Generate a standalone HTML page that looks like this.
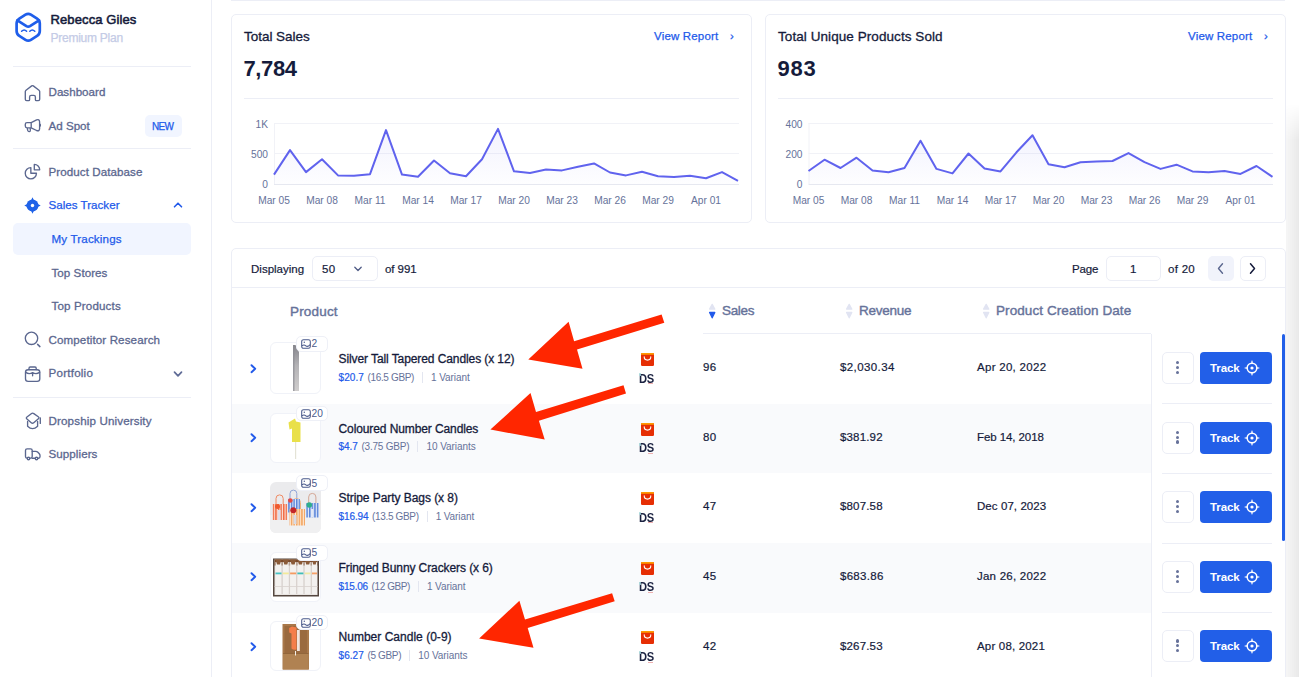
<!DOCTYPE html>
<html lang="en">
<head>
<meta charset="utf-8">
<title>Sales Tracker - My Trackings</title>
<style>
*{box-sizing:border-box;margin:0;padding:0}
html,body{width:1299px;height:677px;overflow:hidden;background:#fff}
body{position:relative;font-family:"Liberation Sans",sans-serif;color:#151b3b;font-size:12px}
.abs{position:absolute}
.t{position:absolute;white-space:nowrap;line-height:1}
/* sidebar */
#side{position:absolute;left:0;top:0;width:212px;height:677px;background:#fff;border-right:1px solid #eceef6}
.hr{position:absolute;left:13px;width:178px;height:1px;background:#eceef6}
.nav{position:absolute;left:48.5px;white-space:nowrap;font-size:11.6px;font-weight:500;color:#5b678f;line-height:14px;-webkit-text-stroke:.3px #5b678f}
.nav.sub{left:51.5px}
.nav.on{color:#225aea;-webkit-text-stroke:.25px #225aea}
.ico{position:absolute;left:24px;width:17px;height:17px;fill:none;stroke:#5b678f;stroke-width:1.5;stroke-linecap:round;stroke-linejoin:round}
/* cards */
.card{position:absolute;border:1px solid #eceef6;border-radius:5px;background:#fff}
.ct{position:absolute;font-size:13.5px;font-weight:500;color:#151b3b;white-space:nowrap;line-height:16px;-webkit-text-stroke:.3px #151b3b}
.big{position:absolute;font-size:22px;font-weight:700;color:#151b3b;white-space:nowrap;line-height:26px}
.vr{position:absolute;font-size:11.5px;font-weight:500;color:#225aea;white-space:nowrap;line-height:14px;-webkit-text-stroke:.25px #225aea}
svg text{font-family:"Liberation Sans",sans-serif}
/* table */
.row{position:absolute;left:232px;width:919px}
.row.g{background:#f9fafc}
.pimg{position:absolute;left:270px;width:51px;height:52px;border:1px solid #f0f2f8;border-radius:6px;background:#fff;overflow:hidden}
.badge{position:absolute;left:296px;width:32px;height:15.5px;border:1px solid #eef0f7;border-radius:5px;background:#fff}
.badge svg{position:absolute;left:3.8px;top:2px;width:10px;height:10px;fill:none;stroke:#4a5a8c;stroke-width:1.05}
.badge span{position:absolute;left:14.6px;top:1.2px;font-size:10.2px;line-height:11px;color:#4a5a8c}
.chev{position:absolute;left:249px;width:8px;height:12px;fill:none;stroke:#225aea;stroke-width:1.9;stroke-linecap:round;stroke-linejoin:round}
.pn{position:absolute;left:338.5px;font-size:12px;font-weight:500;color:#151b3b;white-space:nowrap;line-height:14px;-webkit-text-stroke:.3px #151b3b}
.ps{position:absolute;left:338.5px;font-size:10px;color:#66729a;white-space:nowrap;line-height:12px}
.ps b{font-weight:500;color:#225aea;-webkit-text-stroke:.2px #225aea;margin-right:3.6px}
.ps span{display:inline-block}
.ps i{display:inline-block;width:1px;height:11px;background:#e3e6f0;margin:0 8px 0 8px;vertical-align:-2px}
.bag{position:absolute;left:641px;width:13px;height:13px}
.ds{position:absolute;left:638.8px;font-size:12px;font-weight:700;color:#1a2140;line-height:12px;letter-spacing:-.3px;margin-top:.2px;transform:scaleX(.93);transform-origin:0 0}
.val{position:absolute;font-size:11.5px;font-weight:500;color:#151b3b;white-space:nowrap;line-height:14px;-webkit-text-stroke:.2px #151b3b}
.th{position:absolute;font-size:13.5px;font-weight:500;color:#66729a;white-space:nowrap;line-height:16px;-webkit-text-stroke:.4px #66729a}
.more{position:absolute;left:1162px;width:32px;height:32px;border:1px solid #eceef6;border-radius:5px;background:#fff}
.more i{position:absolute;left:13.2px;width:3.2px;height:3.2px;border-radius:50%;background:#67729a}
.track{position:absolute;left:1200px;width:72px;height:32px;border-radius:4px;background:#225fe8;color:#fff;font-size:11.5px;font-weight:700;line-height:33px;padding-left:10px;letter-spacing:-.08px}
.track svg{position:absolute;left:44.4px;top:8px;width:16px;height:16px;fill:none;stroke:#fff;stroke-width:1.6;stroke-linecap:round}
.sep{position:absolute;left:1162px;width:110px;height:1px;background:#eceef6}
</style>
</head>
<body>

<!-- ================= SIDEBAR ================= -->
<div id="side">
  <svg class="abs" style="left:0;top:0" width="212" height="480" viewBox="0 0 212 480" fill="none" stroke="#5b678f" stroke-width="1.35" stroke-linecap="round" stroke-linejoin="round">
    <g stroke="#1f5eea" stroke-width="2.7">
      <path d="M25.5 14.62Q28.2 12.9 30.9 14.62L37.1 18.58Q39.8 20.3 39.8 23.5L39.8 31Q39.8 34.2 37.09 35.9L30.91 39.8Q28.2 41.5 25.49 39.8L19.31 35.9Q16.6 34.2 16.6 31L16.6 23.5Q16.6 20.3 19.3 18.58Z"/>
      <path d="M17.4 20.3 L26.4 26.1 Q28.2 27.2 30 26.1 L39 20.3"/>
      <path d="M21.6 31.2 Q24.2 28.6 26.6 31.2 M29.8 31.2 Q32.2 28.6 34.8 31.2" stroke-width="1.5"/>
    </g>
    <path d="M25.3 91.6Q25.3 90.8 26 90.2L31.7 85.9Q32.5 85.3 33.3 85.9L39 90.2Q39.7 90.8 39.7 91.6V99.2Q39.7 100.6 38.3 100.6H36.3Q35.4 100.6 35.4 99.7V97Q35.4 95.4 33.8 95.4H31.2Q29.6 95.4 29.6 97V99.7Q29.6 100.6 28.7 100.6H26.7Q25.3 100.6 25.3 99.2Z"/>
    <path d="M31.2 122.6L36.6 119.9Q39.4 118.8 39.6 121.8V128.6Q39.4 131.6 36.6 130.5L31.2 127.8M31.2 122.6H27Q25.3 122.6 25.3 124.3V126.1Q25.3 127.8 27 127.8H31.2ZM27.2 128L27.8 130.6Q28.2 131.8 29.4 131.6Q30.6 131.4 30.4 130.2L30.1 128M40.3 124.4V126"/>
    <path d="M30.85 167.6A5.6 5.6 0 1 0 36.45 173.2H30.85ZM34.3 164.4A5.4 5.4 0 0 1 39.7 169.8H34.3Z"/>
    <g stroke="none" fill="#1f62e8"><circle cx="32.5" cy="205.5" r="6"/><path d="M31.1 200.2L32.5 197.3L33.9 200.2ZM31.1 210.8L32.5 213.7L33.9 210.8ZM27.2 204.1L24.3 205.5L27.2 206.9ZM37.8 204.1L40.7 205.5L37.8 206.9Z"/><circle cx="32.5" cy="205.5" r="1.7" fill="#fff"/></g>
    <circle cx="31.5" cy="338.3" r="6.2"/><path d="M37.6 344.4L39.9 346.6" stroke-width="1.5"/>
    <rect x="25.5" y="369.7" width="14.3" height="11.6" rx="2.6"/><path d="M29 369.5V368.2Q29 367 30.2 367H35Q36.2 367 36.2 368.2V369.5M25.7 372.4Q29 374.7 32.6 372.6Q36.2 374.7 39.6 372.4M32.6 374V375.8"/>
    <path d="M26.93 419.03Q25.7 418 26.96 417.02L31.24 413.68Q32.5 412.7 33.82 413.61L38.28 416.69Q39.6 417.6 38.39 418.64L33.71 422.66Q32.5 423.7 31.27 422.67Z"/><path d="M27.6 421.4V426.2Q32.5 431 37.6 426.2V421.4M40.3 417.8V423.4"/>
    <rect x="25.5" y="448.9" width="6.7" height="9.3" rx="1.6"/><path d="M32.2 451.3H35.6Q37 451.3 37.9 452.3L39.3 453.8Q40 454.6 40 455.6V456.8Q40 458.2 38.6 458.2H32.2"/><circle cx="28.5" cy="458.5" r="1.25" fill="#fff"/><circle cx="36.5" cy="458.5" r="1.25" fill="#fff"/>
  </svg>
  <div class="t" style="letter-spacing:0.11px;left:50.5px;top:12.5px;font-size:13px;font-weight:400;color:#151b3b;line-height:14px;-webkit-text-stroke:.55px #151b3b">Rebecca Giles</div>
  <div class="t" style="letter-spacing:-0.25px;left:50.5px;top:30.5px;font-size:12px;font-weight:500;color:#c4cbe6;line-height:14px;-webkit-text-stroke:.25px #c4cbe6">Premium Plan</div>
  <div class="hr" style="top:66px"></div>
  <div class="nav" style="letter-spacing:0.02px;top:85px">Dashboard</div>
  <div class="nav" style="letter-spacing:0.0px;top:119px">Ad Spot</div>
  <div class="abs" style="left:145px;top:115px;width:37px;height:22px;border-radius:5px;background:#f1f5ff"></div>
  <div class="t" style="letter-spacing:-0.65px;left:152px;top:120.5px;font-size:10px;font-weight:500;color:#225aea;line-height:11px;-webkit-text-stroke:.25px #225aea">NEW</div>
  <div class="hr" style="top:148px"></div>
  <div class="nav" style="letter-spacing:0.07px;top:165px">Product Database</div>
  <div class="nav on" style="letter-spacing:0.01px;top:198px">Sales Tracker</div>
  <svg class="abs" style="left:172.8px;top:201px;width:10px;height:8px" viewBox="0 0 10 8" fill="none" stroke="#225aea" stroke-width="1.6" stroke-linecap="round" stroke-linejoin="round"><path d="M1.5 5.8 L5 2.2 L8.5 5.8"/></svg>

  <div class="abs" style="left:13px;top:223px;width:178px;height:32px;border-radius:5px;background:#f1f5ff"></div>
  <div class="nav sub on" style="letter-spacing:0.16px;top:232px">My Trackings</div>
  <div class="nav sub" style="letter-spacing:0.05px;top:266px">Top Stores</div>
  <div class="nav sub" style="letter-spacing:0.14px;top:299px">Top Products</div>
  <div class="nav" style="letter-spacing:0.11px;top:333px">Competitor Research</div>
  <div class="nav" style="letter-spacing:0.23px;top:366px">Portfolio</div>
  <svg class="abs" style="left:172.8px;top:370px;width:10px;height:8px" viewBox="0 0 10 8" fill="none" stroke="#5f6b96" stroke-width="1.7" stroke-linecap="round" stroke-linejoin="round"><path d="M1.5 2.2 L5 5.8 L8.5 2.2"/></svg>
  <div class="hr" style="top:397px"></div>
  <div class="nav" style="letter-spacing:0.14px;top:414px">Dropship University</div>
  <div class="nav" style="letter-spacing:0.07px;top:447px">Suppliers</div>
</div>

<!-- ================= TOP LINE ================= -->
<div class="abs" style="left:231px;top:0;width:1054px;height:1px;background:#eceef6"></div>

<!-- ================= CARD 1 ================= -->
<div class="card" style="left:231px;top:14px;width:521px;height:209px"></div>
<div class="ct" style="letter-spacing:-0.03px;left:244px;top:28.7px">Total Sales</div>
<div class="big" style="letter-spacing:-0.37px;left:243.5px;top:56px">7,784</div>
<div class="vr" style="letter-spacing:0.18px;left:654px;top:29px">View Report</div>
<div class="vr" style="left:730px;top:28.5px">›</div>
<div class="abs" style="left:244px;top:98px;width:495px;height:1px;background:#eceef6"></div>
<svg class="abs" style="left:231px;top:100px" width="521" height="122" viewBox="231 100 521 122">
  <defs><linearGradient id="g1" x1="0" y1="0" x2="0" y2="1"><stop offset="0" stop-color="#6366f1" stop-opacity=".08"/><stop offset="1" stop-color="#6366f1" stop-opacity=".01"/></linearGradient></defs>
  <g stroke="#f1f2f7" stroke-width="1"><path d="M274 123.5H739M274 153.5H739"/><path d="M274.5 123V184"/></g>
  <path d="M274 184.5H739" stroke="#e6e8f0" stroke-width="1"/>
  <g font-size="10.2" fill="#66729a" text-anchor="end"><text x="268" y="127.5">1K</text><text x="268" y="157.5">500</text><text x="268" y="187.5">0</text></g>
  <g font-size="10.2" fill="#66729a" text-anchor="middle"><text x="274" y="204.4">Mar 05</text><text x="322" y="204.4">Mar 08</text><text x="370" y="204.4">Mar 11</text><text x="418" y="204.4">Mar 14</text><text x="466" y="204.4">Mar 17</text><text x="514" y="204.4">Mar 20</text><text x="562" y="204.4">Mar 23</text><text x="610" y="204.4">Mar 26</text><text x="658" y="204.4">Mar 29</text><text x="706" y="204.4">Apr 01</text></g>
  <path fill="url(#g1)" d="M274,184 L274,174.6 290,150.1 306,172.1 322,159.2 338,175.4 354,175.8 370,174.2 386,130.1 402,174.6 418,176.7 434,160.5 450,173.3 466,176.3 482,159.2 498,128.9 514,171.3 530,172.9 546,169.6 562,170.4 578,166.7 594,163.4 610,172.5 626,175.4 642,171.7 658,176.3 674,177.1 690,175.8 706,178.3 722,172.1 738,180.8 L738,184 Z"/>
  <polyline fill="none" stroke="#6063ee" stroke-width="2" stroke-linejoin="round" points="274,174.6 290,150.1 306,172.1 322,159.2 338,175.4 354,175.8 370,174.2 386,130.1 402,174.6 418,176.7 434,160.5 450,173.3 466,176.3 482,159.2 498,128.9 514,171.3 530,172.9 546,169.6 562,170.4 578,166.7 594,163.4 610,172.5 626,175.4 642,171.7 658,176.3 674,177.1 690,175.8 706,178.3 722,172.1 738,180.8"/>
</svg>

<!-- ================= CARD 2 ================= -->
<div class="card" style="left:765px;top:14px;width:521px;height:209px"></div>
<div class="ct" style="letter-spacing:0.07px;left:778px;top:28.7px">Total Unique Products Sold</div>
<div class="big" style="letter-spacing:0.76px;left:777.5px;top:56px">983</div>
<div class="vr" style="letter-spacing:0.18px;left:1188px;top:29px">View Report</div>
<div class="vr" style="left:1264px;top:28.5px">›</div>
<div class="abs" style="left:778px;top:98px;width:495px;height:1px;background:#eceef6"></div>
<svg class="abs" style="left:765px;top:100px" width="521" height="122" viewBox="765 100 521 122">
  <g stroke="#f1f2f7" stroke-width="1"><path d="M808.5 123.5H1273M808.5 153.5H1273"/><path d="M809 123V184"/></g>
  <path d="M808.5 184.5H1273" stroke="#e6e8f0" stroke-width="1"/>
  <g font-size="10.2" fill="#66729a" text-anchor="end"><text x="802.5" y="127.5">400</text><text x="802.5" y="157.5">200</text><text x="802.5" y="187.5">0</text></g>
  <g font-size="10.2" fill="#66729a" text-anchor="middle"><text x="808.5" y="204.4">Mar 05</text><text x="856.5" y="204.4">Mar 08</text><text x="904.5" y="204.4">Mar 11</text><text x="952.5" y="204.4">Mar 14</text><text x="1000.5" y="204.4">Mar 17</text><text x="1048.5" y="204.4">Mar 20</text><text x="1096.5" y="204.4">Mar 23</text><text x="1144.5" y="204.4">Mar 26</text><text x="1192.5" y="204.4">Mar 29</text><text x="1240.5" y="204.4">Apr 01</text></g>
  <path fill="url(#g1)" d="M808.5,184 L808.5,171 824.5,159.7 840.5,168 856.5,157.7 872.5,170.5 888.5,172.2 904.5,168 920.5,140.7 936.5,168.9 952.5,173.4 968.5,153.5 984.5,168.5 1000.5,171.4 1016.5,152.3 1032.5,135.3 1048.5,164.3 1064.5,167.2 1080.5,162.2 1096.5,161.4 1112.5,161 1128.5,153.1 1144.5,162.2 1160.5,168.9 1176.5,164.7 1192.5,171.4 1208.5,172.2 1224.5,171 1240.5,173.9 1256.5,166 1272.5,176.8 L1272.5,184 Z"/>
  <polyline fill="none" stroke="#6063ee" stroke-width="2" stroke-linejoin="round" points="808.5,171 824.5,159.7 840.5,168 856.5,157.7 872.5,170.5 888.5,172.2 904.5,168 920.5,140.7 936.5,168.9 952.5,173.4 968.5,153.5 984.5,168.5 1000.5,171.4 1016.5,152.3 1032.5,135.3 1048.5,164.3 1064.5,167.2 1080.5,162.2 1096.5,161.4 1112.5,161 1128.5,153.1 1144.5,162.2 1160.5,168.9 1176.5,164.7 1192.5,171.4 1208.5,172.2 1224.5,171 1240.5,173.9 1256.5,166 1272.5,176.8"/>
</svg>

<!-- ================= TABLE CARD ================= -->
<div class="card" style="left:231px;top:248px;width:1055px;height:440px;border-radius:5px"></div>
<div class="t" style="letter-spacing:0.01px;left:251px;top:263px;font-size:11.5px;font-weight:500;line-height:12px;-webkit-text-stroke:.2px #151b3b">Displaying</div>
<div class="abs" style="left:312px;top:256px;width:66px;height:25px;border:1px solid #eceef6;border-radius:5px;background:#fff"></div>
<div class="t" style="left:322px;top:263px;font-size:11.5px;font-weight:500;line-height:12px;letter-spacing:.3px;-webkit-text-stroke:.2px #151b3b">50</div>
<svg class="abs" style="left:353px;top:265px;width:10px;height:8px" viewBox="0 0 10 8" fill="none" stroke="#4f5b85" stroke-width="1.3" stroke-linecap="round" stroke-linejoin="round"><path d="M1.8 2.3 L5 5.5 L8.2 2.3"/></svg>
<div class="t" style="letter-spacing:-0.06px;left:385px;top:263px;font-size:11.5px;font-weight:500;line-height:12px;-webkit-text-stroke:.2px #151b3b">of 991</div>
<div class="t" style="letter-spacing:-0.19px;left:1072px;top:263px;font-size:11.5px;font-weight:500;line-height:12px;-webkit-text-stroke:.2px #151b3b">Page</div>
<div class="abs" style="left:1106px;top:256px;width:55px;height:25px;border:1px solid #eceef6;border-radius:5px;background:#fff"></div>
<div class="t" style="left:1130px;top:263px;font-size:11.5px;font-weight:500;line-height:12px;-webkit-text-stroke:.2px #151b3b">1</div>
<div class="t" style="letter-spacing:0.28px;left:1168px;top:263px;font-size:11.5px;font-weight:500;line-height:12px;-webkit-text-stroke:.2px #151b3b">of 20</div>
<div class="abs" style="left:1208px;top:256px;width:26px;height:25px;border-radius:5px;background:#f1f3fb"></div>
<svg class="abs" style="left:1216px;top:262px;width:9px;height:13px" viewBox="0 0 9 13" fill="none" stroke="#5b678f" stroke-width="1.4" stroke-linecap="round" stroke-linejoin="round"><path d="M6.5 1.8 L2.5 6.5 L6.5 11.2"/></svg>
<div class="abs" style="left:1240px;top:256px;width:26px;height:25px;border:1px solid #eceef6;border-radius:5px;background:#fff"></div>
<svg class="abs" style="left:1248px;top:262px;width:9px;height:13px" viewBox="0 0 9 13" fill="none" stroke="#151b3b" stroke-width="1.5" stroke-linecap="round" stroke-linejoin="round"><path d="M2.5 1.8 L6.5 6.5 L2.5 11.2"/></svg>
<div class="abs" style="left:232px;top:287px;width:1053px;height:1px;background:#eceef6"></div>

<div class="th" style="letter-spacing:0.18px;left:290px;top:303.5px">Product</div>
<svg class="abs" style="left:708.4px;top:303px;width:8.4px;height:16px" viewBox="0 0 8.4 16" stroke-width="1.3" stroke-linejoin="round"><path d="M4.2 1.4L6.8 6.1H1.6Z" fill="#e1e4f2" stroke="#e1e4f2"/><path d="M4.2 14.8L6.8 9.5H1.6Z" fill="#225aea" stroke="#225aea"/></svg><div class="th" style="letter-spacing:-0.32px;left:722px;top:302.8px">Sales</div>
<svg class="abs" style="left:845.4px;top:303px;width:8.4px;height:16px" viewBox="0 0 8.4 16" stroke-width="1.3" stroke-linejoin="round"><path d="M4.2 1.4L6.8 6.1H1.6Z" fill="#e1e4f2" stroke="#e1e4f2"/><path d="M4.2 14.8L6.8 9.5H1.6Z" fill="#e1e4f2" stroke="#e1e4f2"/></svg><div class="th" style="letter-spacing:-0.25px;left:859px;top:302.8px">Revenue</div>
<svg class="abs" style="left:982.4px;top:303px;width:8.4px;height:16px" viewBox="0 0 8.4 16" stroke-width="1.3" stroke-linejoin="round"><path d="M4.2 1.4L6.8 6.1H1.6Z" fill="#e1e4f2" stroke="#e1e4f2"/><path d="M4.2 14.8L6.8 9.5H1.6Z" fill="#e1e4f2" stroke="#e1e4f2"/></svg><div class="th" style="letter-spacing:0.08px;left:996px;top:302.8px">Product Creation Date</div>
<div class="abs" style="left:703px;top:333px;width:448px;height:1px;background:#eceef6"></div>
<div class="row" style="top:334.3px;height:69.6px"></div>
<svg class="chev" style="top:362.5px" viewBox="0 0 8 12"><path d="M2.5 2.2L6.2 5.7L2.5 9.2"/></svg>
<div class="pimg" style="top:342.0px;height:52px;"><svg width="49" height="49" viewBox="0 0 49 49"><defs><linearGradient id="sv" x1="0" y1="0" x2="0" y2="1"><stop offset="0" stop-color="#85858c"/><stop offset=".45" stop-color="#b4b3b6"/><stop offset="1" stop-color="#cfcdcd"/></linearGradient></defs><path d="M22 2 H24.5 L28 9 V48 H22 Z" fill="url(#sv)"/><path d="M22 2 H23.5 V48 H22 Z" fill="#8b8b93" opacity=".7"/></svg></div>
<div class="badge" style="top:336.3px"><svg viewBox="0 0 10 10"><rect x=".7" y=".7" width="8.6" height="8.6" rx="1.8"/><path d="M.9 6.8 Q3 5.2 4.8 6.8 T9.2 5.6"/><circle cx="3.3" cy="3.3" r=".7" fill="#4a5a8c" stroke="none"/></svg><span>2</span></div>
<div class="pn" style="letter-spacing:-0.09px;top:352px">Silver Tall Tapered Candles (x 12)</div>
<div class="ps" style="top:371.8px"><b style="letter-spacing:0.07px;">$20.7</b><span style="letter-spacing:-0.34px;">(16.5 GBP)</span><i></i><span style="letter-spacing:-0.09px;">1 Variant</span></div>
<svg class="bag" style="top:352.9px" viewBox="0 0 13 13"><rect width="13" height="13" rx="1.2" fill="#e62e04"/><path d="M0 1.2 A1.2 1.2 0 0 1 1.2 0 H11.8 A1.2 1.2 0 0 1 13 1.2 V1.8 H0 Z" fill="#ff9900"/><path d="M3.2 3.8 a3.3 3.3 0 0 0 6.6 0" fill="none" stroke="#fff" stroke-width="1.1" stroke-linecap="round"/></svg>
<div class="ds" style="top:372.5px">DS</div><div class="abs" style="left:639px;top:373.0px;width:1.5px;height:3px;background:#a9d9dc;opacity:.8"></div><div class="abs" style="left:648px;top:383.2px;width:4.5px;height:1px;background:#eeb0b0"></div>
<div class="val" style="letter-spacing:0.35px;left:703px;top:360.3px">96</div>
<div class="val" style="letter-spacing:0.4px;left:840px;top:360.3px">$2,030.34</div>
<div class="val" style="letter-spacing:0.29px;left:977px;top:360.3px">Apr 20, 2022</div>
<div class="more" style="top:352px"><i style="top:8.1px"></i><i style="top:13px"></i><i style="top:17.9px"></i></div>
<div class="track" style="top:352px">Track<svg viewBox="0 0 16 16"><circle cx="8" cy="8" r="4.8" stroke-width="1.5"/><path d="M8 0L9.1 2.8H6.9ZM8 16L9.1 13.2H6.9ZM0 8L2.8 6.9V9.1ZM16 8L13.2 6.9V9.1Z" fill="#fff" stroke="none"/><circle cx="8" cy="8" r="1.6" fill="#fff" stroke="none"/></svg></div>
<div class="row g" style="top:403.9px;height:69.6px"></div>
<svg class="chev" style="top:432.1px" viewBox="0 0 8 12"><path d="M2.5 2.2L6.2 5.7L2.5 9.2"/></svg>
<div class="pimg" style="top:412.5px;height:50px;"><svg width="49" height="49" viewBox="0 0 49 49"><path d="M17.5 8.5 L24 4.5 L25 7.5 L29.5 8.5 V28 H21 V14.5 L18.5 15.5 Z" fill="#e9e04a"/><path d="M24.6 28 V45" stroke="#e4e3d6" stroke-width="1.2"/></svg></div>
<div class="badge" style="top:405.9px"><svg viewBox="0 0 10 10"><rect x=".7" y=".7" width="8.6" height="8.6" rx="1.8"/><path d="M.9 6.8 Q3 5.2 4.8 6.8 T9.2 5.6"/><circle cx="3.3" cy="3.3" r=".7" fill="#4a5a8c" stroke="none"/></svg><span>20</span></div>
<div class="pn" style="letter-spacing:-0.1px;top:421.6px">Coloured Number Candles</div>
<div class="ps" style="top:441.4px"><b style="letter-spacing:-0.04px;">$4.7</b><span style="letter-spacing:-0.2px;">(3.75 GBP)</span><i></i><span style="letter-spacing:-0.05px;">10 Variants</span></div>
<svg class="bag" style="top:422.5px" viewBox="0 0 13 13"><rect width="13" height="13" rx="1.2" fill="#e62e04"/><path d="M0 1.2 A1.2 1.2 0 0 1 1.2 0 H11.8 A1.2 1.2 0 0 1 13 1.2 V1.8 H0 Z" fill="#ff9900"/><path d="M3.2 3.8 a3.3 3.3 0 0 0 6.6 0" fill="none" stroke="#fff" stroke-width="1.1" stroke-linecap="round"/></svg>
<div class="ds" style="top:442.1px">DS</div><div class="abs" style="left:639px;top:442.6px;width:1.5px;height:3px;background:#a9d9dc;opacity:.8"></div><div class="abs" style="left:648px;top:452.8px;width:4.5px;height:1px;background:#eeb0b0"></div>
<div class="val" style="letter-spacing:0.45px;left:703px;top:429.9px">80</div>
<div class="val" style="letter-spacing:0.16px;left:840px;top:429.9px">$381.92</div>
<div class="val" style="letter-spacing:-0.08px;left:977px;top:429.9px">Feb 14, 2018</div>
<div class="more" style="top:421.6px"><i style="top:8.1px"></i><i style="top:13px"></i><i style="top:17.9px"></i></div>
<div class="track" style="top:421.6px">Track<svg viewBox="0 0 16 16"><circle cx="8" cy="8" r="4.8" stroke-width="1.5"/><path d="M8 0L9.1 2.8H6.9ZM8 16L9.1 13.2H6.9ZM0 8L2.8 6.9V9.1ZM16 8L13.2 6.9V9.1Z" fill="#fff" stroke="none"/><circle cx="8" cy="8" r="1.6" fill="#fff" stroke="none"/></svg></div>
<div class="sep" style="top:403.4px"></div>
<div class="row" style="top:473.4px;height:69.6px"></div>
<svg class="chev" style="top:501.6px" viewBox="0 0 8 12"><path d="M2.5 2.2L6.2 5.7L2.5 9.2"/></svg>
<div class="pimg" style="top:482.0px;height:51px;border:0;"><svg width="51" height="51" viewBox="0 0 51 51"><defs>
<pattern id="pr" width="2.6" height="4" patternUnits="userSpaceOnUse"><rect width="2.6" height="4" fill="#f06a43"/><rect x="1.5" width="1.1" height="4" fill="#fbe3da"/></pattern>
<pattern id="pb" width="2.6" height="4" patternUnits="userSpaceOnUse"><rect width="2.6" height="4" fill="#5a84d8"/><rect x="1.5" width="1.1" height="4" fill="#e4ecfb"/></pattern>
<pattern id="po" width="2.6" height="4" patternUnits="userSpaceOnUse"><rect width="2.6" height="4" fill="#f2a25c"/><rect x="1.5" width="1.1" height="4" fill="#fdeedd"/></pattern>
<filter id="sf" x="-5%" y="-5%" width="110%" height="110%"><feGaussianBlur stdDeviation=".35"/></filter></defs>
<rect width="51" height="51" fill="#ebebed"/><rect y="33" width="51" height="18" fill="#f0f0f1"/>
<g filter="url(#sf)">
<g fill="none" stroke-width="1"><path d="M6 22V16.5a3.6 3.6 0 0 1 7.2 0V22" stroke="#ef8a62"/><path d="M20 17V11.5a3.4 3.4 0 0 1 6.8 0V17" stroke="#8fa3d6"/><path d="M38.7 21V15a3.6 3.6 0 0 1 7.2 0V21" stroke="#d3a796"/><path d="M22.5 27V20.5a4 4 0 0 1 8 0V27" stroke="#eeb07c"/></g>
<rect x="18" y="17" width="12" height="13.5" fill="url(#pb)"/>
<rect x="2.7" y="22" width="14.5" height="16" fill="url(#pr)"/><rect x="8" y="28" width="2.6" height="10" fill="#dcdde8"/>
<rect x="36" y="21" width="13" height="14.5" fill="url(#pb)"/><rect x="41" y="27" width="2.4" height="8.5" fill="#e3e8f6"/>
<rect x="19.5" y="27" width="15.5" height="16.5" fill="url(#po)"/><rect x="23.5" y="33" width="3" height="9" fill="#d9dbe6"/>
<circle cx="7.5" cy="24.5" r="2.5" fill="#ef5a2f"/><circle cx="20.3" cy="18.5" r="2.3" fill="#e8493f"/><circle cx="23.3" cy="28.2" r="3" fill="#c3262b"/><circle cx="39.3" cy="23" r="2.8" fill="#2fae8c"/>
</g></svg></div>
<div class="badge" style="top:475.4px"><svg viewBox="0 0 10 10"><rect x=".7" y=".7" width="8.6" height="8.6" rx="1.8"/><path d="M.9 6.8 Q3 5.2 4.8 6.8 T9.2 5.6"/><circle cx="3.3" cy="3.3" r=".7" fill="#4a5a8c" stroke="none"/></svg><span>5</span></div>
<div class="pn" style="letter-spacing:-0.06px;top:491.1px">Stripe Party Bags (x 8)</div>
<div class="ps" style="top:510.9px"><b style="letter-spacing:-0.1px;">$16.94</b><span style="letter-spacing:-0.35px;">(13.5 GBP)</span><i></i><span style="letter-spacing:-0.09px;">1 Variant</span></div>
<svg class="bag" style="top:492px" viewBox="0 0 13 13"><rect width="13" height="13" rx="1.2" fill="#e62e04"/><path d="M0 1.2 A1.2 1.2 0 0 1 1.2 0 H11.8 A1.2 1.2 0 0 1 13 1.2 V1.8 H0 Z" fill="#ff9900"/><path d="M3.2 3.8 a3.3 3.3 0 0 0 6.6 0" fill="none" stroke="#fff" stroke-width="1.1" stroke-linecap="round"/></svg>
<div class="ds" style="top:511.6px">DS</div><div class="abs" style="left:639px;top:512.1px;width:1.5px;height:3px;background:#a9d9dc;opacity:.8"></div><div class="abs" style="left:648px;top:522.3px;width:4.5px;height:1px;background:#eeb0b0"></div>
<div class="val" style="letter-spacing:0.35px;left:703px;top:499.4px">47</div>
<div class="val" style="letter-spacing:0.16px;left:840px;top:499.4px">$807.58</div>
<div class="val" style="letter-spacing:0.07px;left:977px;top:499.4px">Dec 07, 2023</div>
<div class="more" style="top:491.1px"><i style="top:8.1px"></i><i style="top:13px"></i><i style="top:17.9px"></i></div>
<div class="track" style="top:491.1px">Track<svg viewBox="0 0 16 16"><circle cx="8" cy="8" r="4.8" stroke-width="1.5"/><path d="M8 0L9.1 2.8H6.9ZM8 16L9.1 13.2H6.9ZM0 8L2.8 6.9V9.1ZM16 8L13.2 6.9V9.1Z" fill="#fff" stroke="none"/><circle cx="8" cy="8" r="1.6" fill="#fff" stroke="none"/></svg></div>
<div class="sep" style="top:472.9px"></div>
<div class="row g" style="top:543px;height:69.6px"></div>
<svg class="chev" style="top:571.2px" viewBox="0 0 8 12"><path d="M2.5 2.2L6.2 5.7L2.5 9.2"/></svg>
<div class="pimg" style="top:551.5px;height:50px;"><svg width="49" height="49" viewBox="0 0 49 49"><rect x="2" y="5.5" width="46" height="38" fill="#54463f"/><rect x="3.5" y="6.5" width="43" height="35.5" fill="#e9e5e2"/><rect x="3.5" y="6.5" width="43" height="6" fill="#7a4a2b"/>
 <g fill="#f3f1ef"><rect x="4.5" y="9" width="6" height="32"/><rect x="11.8" y="9" width="6" height="32"/><rect x="19.1" y="9" width="6" height="32"/><rect x="26.4" y="9" width="6" height="32"/><rect x="33.7" y="9" width="6" height="32"/><rect x="41" y="9" width="5" height="32"/></g>
 <g stroke="#cfc8c4" stroke-width=".8"><path d="M11.1 9V41M18.4 9V41M25.7 9V41M33 9V41M40.3 9V41"/></g>
 <g fill="#8a5a38"><path d="M4.5 6.5h6l-1.5 5h-3z"/><path d="M11.8 6.5h6l-1.5 5h-3z"/><path d="M19.1 6.5h6l-1.5 5h-3z"/><path d="M26.4 6.5h6l-1.5 5h-3z"/><path d="M33.7 6.5h6l-1.5 5h-3z"/><path d="M41 6.5h5l-1.3 5h-2.5z"/></g>
 <rect x="4.5" y="19.5" width="6" height="1.8" fill="#48c3c6"/><rect x="11.8" y="19.5" width="6" height="1.8" fill="#f3ea9a"/><rect x="19.1" y="19.5" width="6" height="1.8" fill="#f59a60"/><rect x="26.4" y="19.5" width="6" height="1.8" fill="#3fbdb8"/><rect x="33.7" y="19.5" width="6" height="1.8" fill="#f0e9a5"/><rect x="41" y="19.5" width="5" height="1.8" fill="#f7a066"/>
 <path d="M3.5 33.5H46.5" stroke="#d8d2ce" stroke-width=".8"/></svg></div>
<div class="badge" style="top:545px"><svg viewBox="0 0 10 10"><rect x=".7" y=".7" width="8.6" height="8.6" rx="1.8"/><path d="M.9 6.8 Q3 5.2 4.8 6.8 T9.2 5.6"/><circle cx="3.3" cy="3.3" r=".7" fill="#4a5a8c" stroke="none"/></svg><span>5</span></div>
<div class="pn" style="letter-spacing:-0.09px;top:560.7px">Fringed Bunny Crackers (x 6)</div>
<div class="ps" style="top:580.5px"><b style="letter-spacing:-0.18px;">$15.06</b><span style="letter-spacing:-0.42px;">(12 GBP)</span><i></i><span style="letter-spacing:-0.09px;">1 Variant</span></div>
<svg class="bag" style="top:561.6px" viewBox="0 0 13 13"><rect width="13" height="13" rx="1.2" fill="#e62e04"/><path d="M0 1.2 A1.2 1.2 0 0 1 1.2 0 H11.8 A1.2 1.2 0 0 1 13 1.2 V1.8 H0 Z" fill="#ff9900"/><path d="M3.2 3.8 a3.3 3.3 0 0 0 6.6 0" fill="none" stroke="#fff" stroke-width="1.1" stroke-linecap="round"/></svg>
<div class="ds" style="top:581.2px">DS</div><div class="abs" style="left:639px;top:581.7px;width:1.5px;height:3px;background:#a9d9dc;opacity:.8"></div><div class="abs" style="left:648px;top:591.9px;width:4.5px;height:1px;background:#eeb0b0"></div>
<div class="val" style="letter-spacing:0.45px;left:703px;top:569px">45</div>
<div class="val" style="letter-spacing:0.29px;left:840px;top:569px">$683.86</div>
<div class="val" style="letter-spacing:0.23px;left:977px;top:569px">Jan 26, 2022</div>
<div class="more" style="top:560.7px"><i style="top:8.1px"></i><i style="top:13px"></i><i style="top:17.9px"></i></div>
<div class="track" style="top:560.7px">Track<svg viewBox="0 0 16 16"><circle cx="8" cy="8" r="4.8" stroke-width="1.5"/><path d="M8 0L9.1 2.8H6.9ZM8 16L9.1 13.2H6.9ZM0 8L2.8 6.9V9.1ZM16 8L13.2 6.9V9.1Z" fill="#fff" stroke="none"/><circle cx="8" cy="8" r="1.6" fill="#fff" stroke="none"/></svg></div>
<div class="sep" style="top:542.5px"></div>
<div class="row" style="top:612.6px;height:69.6px"></div>
<svg class="chev" style="top:640.8px" viewBox="0 0 8 12"><path d="M2.5 2.2L6.2 5.7L2.5 9.2"/></svg>
<div class="pimg" style="top:621.3px;height:50px;"><svg width="49" height="49" viewBox="0 0 49 49"><rect x="11.5" y="2" width="26.5" height="45.5" fill="#a9784a"/><rect x="13.5" y="4" width="22.5" height="28" fill="#9a6a3f"/><rect x="12" y="31.5" width="25.5" height="16" fill="#b08252"/><path d="M12 31.5H37.5" stroke="#8d6238" stroke-width=".8"/>
 <path d="M26 8 V29 H28.8 V8Z" fill="#f2e4dc"/><path d="M18.2 6 L21 4.5 L25.5 5.5 V27.5 Q22.5 28.5 20.5 26.5 V11.5 L18.2 10.5 Z" fill="#f47e4a"/><path d="M24.5 29V33.5" stroke="#f3efe9" stroke-width="1"/></svg></div>
<div class="badge" style="top:614.6px"><svg viewBox="0 0 10 10"><rect x=".7" y=".7" width="8.6" height="8.6" rx="1.8"/><path d="M.9 6.8 Q3 5.2 4.8 6.8 T9.2 5.6"/><circle cx="3.3" cy="3.3" r=".7" fill="#4a5a8c" stroke="none"/></svg><span>20</span></div>
<div class="pn" style="letter-spacing:0.02px;top:630.3px">Number Candle (0-9)</div>
<div class="ps" style="top:650.1px"><b style="letter-spacing:0.07px;">$6.27</b><span style="letter-spacing:-0.35px;">(5 GBP)</span><i></i><span style="letter-spacing:-0.05px;">10 Variants</span></div>
<svg class="bag" style="top:631.2px" viewBox="0 0 13 13"><rect width="13" height="13" rx="1.2" fill="#e62e04"/><path d="M0 1.2 A1.2 1.2 0 0 1 1.2 0 H11.8 A1.2 1.2 0 0 1 13 1.2 V1.8 H0 Z" fill="#ff9900"/><path d="M3.2 3.8 a3.3 3.3 0 0 0 6.6 0" fill="none" stroke="#fff" stroke-width="1.1" stroke-linecap="round"/></svg>
<div class="ds" style="top:650.8px">DS</div><div class="abs" style="left:639px;top:651.3px;width:1.5px;height:3px;background:#a9d9dc;opacity:.8"></div><div class="abs" style="left:648px;top:661.5px;width:4.5px;height:1px;background:#eeb0b0"></div>
<div class="val" style="letter-spacing:0.25px;left:703px;top:638.6px">42</div>
<div class="val" style="letter-spacing:0.16px;left:840px;top:638.6px">$267.53</div>
<div class="val" style="letter-spacing:0.18px;left:977px;top:638.6px">Apr 08, 2021</div>
<div class="more" style="top:630.3px"><i style="top:8.1px"></i><i style="top:13px"></i><i style="top:17.9px"></i></div>
<div class="track" style="top:630.3px">Track<svg viewBox="0 0 16 16"><circle cx="8" cy="8" r="4.8" stroke-width="1.5"/><path d="M8 0L9.1 2.8H6.9ZM8 16L9.1 13.2H6.9ZM0 8L2.8 6.9V9.1ZM16 8L13.2 6.9V9.1Z" fill="#fff" stroke="none"/><circle cx="8" cy="8" r="1.6" fill="#fff" stroke="none"/></svg></div>
<div class="sep" style="top:612.1px"></div>
<div class="abs" style="left:1151px;top:334px;width:1px;height:343px;background:#eceef6"></div>
<div class="abs" style="left:1282px;top:334px;width:3px;height:207px;background:#225fe8;border-radius:2px"></div>
<div class="abs" style="left:1286px;top:100px;width:13px;height:577px;background:linear-gradient(90deg,rgba(0,0,0,.035),rgba(0,0,0,.085));-webkit-mask-image:linear-gradient(180deg,transparent 4px,#000 40px);mask-image:linear-gradient(180deg,transparent 4px,#000 40px)"></div>
<svg class="abs" style="left:0;top:0;pointer-events:none" width="1299" height="677" viewBox="0 0 1299 677" fill="#ff2600"><polygon points="528.3,359.4 568.6,321.7 574.1,341.2 661.6,314.4 664.3,322.8 577,349.6 582.5,368.7"/><polygon points="490.4,429.6 530.5,393 536,411.9 623.5,385.3 626,393.5 538.9,420.7 544.7,439.6"/><polygon points="479.1,638.6 519.4,600.7 525,619.6 612.1,593.2 614.7,601.3 527.7,628.1 533.5,647.7"/></svg>

</body>
</html>
